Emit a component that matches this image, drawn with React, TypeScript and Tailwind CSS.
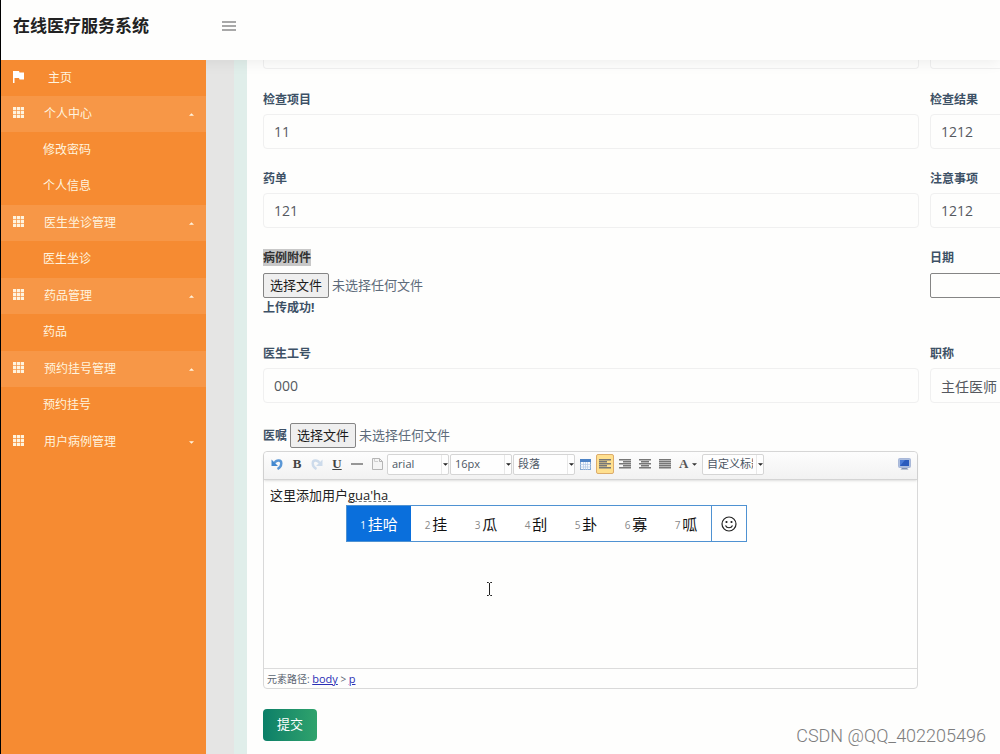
import { useRef, useState } from 'react';
import type { ReactNode } from 'react';

type MenuGroup = {
  title: string;
  open: boolean;
  items: string[];
}

const menu: MenuGroup[] = [
  { title: '个人中心', open: true, items: ['修改密码', '个人信息'] },
  { title: '医生坐诊管理', open: true, items: ['医生坐诊'] },
  { title: '药品管理', open: true, items: ['药品'] },
  { title: '预约挂号管理', open: true, items: ['预约挂号'] },
  { title: '用户病例管理', open: false, items: [] },
];

const candidates = ['挂哈', '挂', '瓜', '刮', '卦', '寡', '呱'];

const GridIcon = () => (
  <svg className="w-[11px] h-[11px] mb-1" viewBox="0 0 11 11" fill="currentColor">
    {[0, 3.9, 7.8].map((y) => [0, 3.9, 7.8].map((x) => (
      <rect key={`${x}-${y}`} x={x} y={y} width="3.200" height="3.200" />
    )))}
  </svg>
)

const Caret = ({ up = false }: { up?: boolean }) => (
  <svg className="w-[5px] h-[3px]" viewBox="0 0 6 3" fill="currentColor">
    <path d={up ? 'M0 3L3 0L6 3Z' : 'M0 0L3 3L6 0Z'} />
  </svg>
)

const Sidebar = () => (
  <nav className="w-[205px] shrink-0 bg-[#f68b32] text-xs text-[#fff4df]">
    <a href="#home" className="flex items-center h-9 pl-3">
      <svg className="w-[11px] h-3 mb-0.5 text-white" viewBox="0 0 11 12" fill="currentColor">
        <path d="M0 0H6L6.500 1.500H11V8.500H6.500L6 7H1.500V12H0Z" />
      </svg>
      <span className="ml-6">主页</span>
    </a>
    {menu.map((group) => (
      <div key={group.title}>
        <button
          className={`flex items-center w-full h-9 pl-3 pr-3 ${group.open ? 'bg-[#f79747]' : ''}`}
          aria-expanded={group.open}>
          <GridIcon />
          <span className="ml-5">{group.title}</span>
          <span className="ml-auto"><Caret up={group.open} /></span>
        </button>
        {group.items.length > 0 && (
          <ul className="pb-px">
            {group.items.map((item) => (
              <li key={item}>
                <a href="#page" className="flex items-center h-9 pl-[42px]">{item}</a>
              </li>
            ))}
          </ul>
        )}
      </div>
    ))}
  </nav>
)

const labelClass = 'block text-xs leading-5 font-bold text-[#3d5166]'

const Field = ({ id, label, value }: { id: string, label: string, value: string }) => (
  <div className="flex flex-col gap-1">
    <label className={labelClass} htmlFor={id}>{label}</label>
    <input
      className="w-full h-[35px] px-2.5 border border-[#f0f0f0] rounded-sm bg-transparent text-sm text-[#55595f]"
      id={id}
      type="text"
      defaultValue={value} />
  </div>
)

const FilePicker = ({ id }: { id: string }) => {
  const ref = useRef<HTMLInputElement>(null);
  const [name, setName] = useState('未选择任何文件');
  return (
    <div className="flex items-center gap-[3px] text-[13px]">
      <button
        type="button"
        className="h-[25px] px-1.5 border border-[#858585] rounded-xs bg-[#efefef] text-[#1c1c1c]"
        onClick={() => ref.current?.click()}>
        选择文件
      </button>
      <span className="text-[#5d6b7a]">{name}</span>
      <input ref={ref} type="file" id={id} hidden
        onChange={(e) => setName(e.target.files?.[0]?.name ?? '未选择任何文件')} />
    </div>
  )
}

const ToolSelect = ({ label, value }: { label: string, value: string }) => (
  <div className="relative w-[62px] h-[21px] shrink-0 border border-[#d5d5d5] rounded-xs bg-[#fefefe]">
    <select
      className="block appearance-none w-[50px] h-full pl-1 overflow-hidden text-[11px] text-[#4c5663]"
      aria-label={label}>
      <option>{value}</option>
    </select>
    <span className="absolute right-0 top-0 flex items-center justify-center w-[7px] h-full border-l border-[#e8e8e8] text-[#222] pointer-events-none">
      <Caret />
    </span>
  </div>
)

const ToolButton = ({ label, active = false, children }: { label: string, active?: boolean, children: ReactNode }) => (
  <button
    type="button"
    aria-label={label}
    className={`flex items-center justify-center w-[18px] h-5 mx-px shrink-0 rounded-xs border ${active ? 'border-[#dcac6c] bg-[#ffe08f]' : 'border-transparent'}`}>
    {children}
  </button>
)

// the second, fourth... lines are the short ones
const AlignIcon = ({ x, width }: { x: number, width: number }) => (
  <svg className="w-3 h-[10px] shrink-0" viewBox="0 0 12 10" fill="#777">
    {[0, 2, 4, 6, 8].map((y, i) => (
      <rect key={y} x={i % 2 ? x : 0} y={y} width={i % 2 ? width : 12} height="1.500" />
    ))}
  </svg>
)

const UndoIcon = ({ redo = false }: { redo?: boolean }) => (
  <svg className="w-3 h-3 shrink-0" viewBox="0 0 12 12" fill="none">
    <g transform={redo ? 'translate(12 0) scale(-1 1)' : undefined}>
      <path d="M3.500 5C5.500 1.500 10.500 1.800 10.300 5.500C10.200 8.500 8.500 10 6.500 11" stroke={redo ? '#cddbeb' : '#5a97d6'} strokeWidth="2.400" />
      <path d="M0.500 1.500V8H7Z" fill={redo ? '#cddbeb' : '#4288cf'} />
    </g>
  </svg>
)

const Toolbar = () => (
  <div className="flex items-center h-[28px] pl-[3px] pr-1.5 pb-[3px] border-b border-[#d4d4d4] bg-linear-to-b from-[#fdfdfd] to-[#f2f2f2] shadow-sm rounded-t-sm">
    <ToolButton label="撤销"><UndoIcon /></ToolButton>
    <ToolButton label="加粗"><span className="font-['Liberation_Serif',serif] text-[13px] font-bold text-[#444]">B</span></ToolButton>
    <ToolButton label="重做"><UndoIcon redo /></ToolButton>
    <ToolButton label="下划线"><span className="font-['Liberation_Serif',serif] text-[13px] font-bold underline text-[#444]">U</span></ToolButton>
    <ToolButton label="分隔线">
      <svg className="w-3 h-3 shrink-0" viewBox="0 0 12 12"><path d="M0 6H12" stroke="#555" strokeWidth="1.200" /></svg>
    </ToolButton>
    <ToolButton label="清空文档">
      <svg className="w-[11px] h-3 shrink-0" viewBox="0 0 11 12">
        <path d="M0.500 0.500H7.500L10.500 3.500V11.500H0.500Z" fill="#f4f4f4" stroke="#b5b5b5" />
        <path d="M7.500 0.500V3.500H10.500" fill="none" stroke="#b5b5b5" />
        <path d="M2.500 1V3.500H6" fill="none" stroke="#cecece" />
      </svg>
    </ToolButton>
    <div className="flex gap-px">
      <ToolSelect label="字体" value="arial" />
      <ToolSelect label="字号" value="16px" />
      <ToolSelect label="段落格式" value="段落" />
    </div>
    <ToolButton label="插入表格">
      <svg className="w-[11px] h-[11px] shrink-0" viewBox="0 0 11 11">
        <rect x="0.500" y="0.500" width="10" height="10" fill="#f5f9fd" stroke="#86a9d2" />
        <rect width="11" height="3" fill="#4d83c6" />
        <path d="M3.500 3V11M5.500 3V11M7.500 3V11M0 5.500H11M0 8H11" stroke="#b3cae5" strokeWidth="0.700" />
      </svg>
    </ToolButton>
    <ToolButton label="居左对齐" active><AlignIcon x={0} width={8} /></ToolButton>
    <ToolButton label="居右对齐"><AlignIcon x={4} width={8} /></ToolButton>
    <ToolButton label="居中对齐"><AlignIcon x={2} width={8} /></ToolButton>
    <ToolButton label="两端对齐"><AlignIcon x={0} width={12} /></ToolButton>
    <button type="button" className="flex items-center gap-1 w-[27px] shrink-0 pl-1 text-[#333]" aria-label="字体颜色">
      <span className="font-['Liberation_Serif',serif] text-[13px] font-bold text-[#555]">A</span>
      <Caret />
    </button>
    <ToolSelect label="自定义标题" value="自定义标题" />
    <button type="button" className="ml-auto" aria-label="全屏">
      <svg className="w-[13px] h-3" viewBox="0 0 13 12">
        <rect x="0.500" y="0.500" width="12" height="9" rx="1" fill="#aebfdf" stroke="#a9b8d8" />
        <rect x="2" y="2" width="9" height="6" fill="#2b5bbd" />
        <path d="M2 8L7 2H2Z" fill="#4b7bd6" />
        <path d="M4 10H9L10.500 11.500H2.500Z" fill="#7f8fb0" />
      </svg>
    </button>
  </div>
)

const Candidates = () => (
  <div className="absolute left-[82px] top-[25px] flex h-[37px] border border-[#4f92d2] bg-white">
    <span className="absolute left-0.5 -top-[5px] w-[42px] border-t border-dashed border-[#777]" />
    {candidates.map((word, i) => (
      <div
        key={word}
        className={`flex items-center justify-center gap-0.5 text-[15px] ${i === 0 ? 'w-16 bg-[#0a6fdc] text-white' : 'w-[50px] text-[#111]'}`}>
        <span className={`text-[10px] pt-1 ${i === 0 ? 'text-white' : 'text-[#888]'}`}>{i + 1}</span>
        <span className="pt-px">{word}</span>
      </div>
    ))}
    <button type="button" className="flex items-center justify-center w-[35px] border-l border-[#4f92d2]" aria-label="表情">
      <svg className="w-4 h-4" viewBox="0 0 16 16" fill="none" stroke="#222" strokeWidth="1.200">
        <circle cx="8" cy="8" r="7" />
        <path d="M4.500 9.500C5.800 12.500 10.200 12.500 11.500 9.500" />
        <circle cx="5.500" cy="6" r="0.500" fill="#222" />
        <circle cx="10.500" cy="6" r="0.500" fill="#222" />
      </svg>
    </button>
  </div>
)

const Editor = () => (
  <div className="mr-px border border-[#d9d9d9] rounded-sm">
    <Toolbar />
    <div className="relative">
      <textarea
        className="block w-full h-[188px] px-1.5 py-[5px] resize-none text-[13px] leading-5 text-[#222]"
        id="advice"
        spellCheck={false}
        defaultValue="这里添加用户gua'ha" />
      <Candidates />
      <svg className="absolute left-[222px] top-[102px] w-[7px] h-[14px]" viewBox="0 0 7 14" fill="none" stroke="#222">
        <path d="M1 0.500H2.500L3.500 1.500L4.500 0.500H6M3.500 1V13M1 13.500H2.500L3.500 12.500L4.500 13.500H6" />
      </svg>
    </div>
    <div className="h-5 px-[3px] border-t border-[#dcdcdc] text-[10px] leading-5 text-[#5a6470]">
      元素路径: <a href="#body" className="text-[11px] text-[#2a2fb5] underline">body</a> &gt; <a href="#p" className="text-[11px] text-[#2a2fb5] underline">p</a>
    </div>
  </div>
)

const App = () => {
  return (
    <div className="relative flex flex-col min-h-screen overflow-hidden border-l border-black bg-[#fefefd] font-['Open_Sans','Noto_Sans_CJK_SC',sans-serif]">
      <header className="relative z-10 flex items-start h-[60px] pl-3 bg-[#fefefd] shadow-[0_2px_14px_rgba(0,0,0,0.07)]">
        <h1 className="w-[209px] pt-3 text-[17px] leading-7 font-bold text-[#222]">在线医疗服务系统</h1>
        <button className="pt-[21px]" aria-label="菜单">
          <svg className="w-[14px] h-[10px]" viewBox="0 0 14 10" stroke="#8c8c8c" strokeWidth="1.500">
            <path d="M0 1H14M0 5H14M0 9H14" />
          </svg>
        </button>
      </header>
      <div className="flex grow">
        <div className="relative z-20 flex"><Sidebar /></div>
        <main className="flex grow min-w-0 pl-7 bg-[#e5e5e4]">
          <form className="grow min-w-0 overflow-hidden pl-4 pb-3 border-l-[13px] border-[#e0eeea] bg-[#fefefd]" onSubmit={(e) => e.preventDefault()}>
            <div className="grid grid-cols-[89%_89%] gap-x-[11px] gap-y-5">
              <div className="h-[9px] mb-px border border-t-0 border-[#f0f0f0] rounded-b-sm" />
              <div className="h-[9px] mb-px border border-t-0 border-[#f0f0f0] rounded-b-sm" />
              <Field id="item" label="检查项目" value="11" />
              <Field id="result" label="检查结果" value="1212" />
              <Field id="drugs" label="药单" value="121" />
              <Field id="notes" label="注意事项" value="1212" />
              <div className="pb-1.5">
                <label className={labelClass} htmlFor="attachment"><span className="bg-[#c8c8c8] text-[#333]">病例附件</span></label>
                <div className="pt-[5px]"><FilePicker id="attachment" /></div>
                <p className={labelClass}>上传成功!</p>
              </div>
              <div className="flex flex-col gap-[5px]">
                <label className={labelClass} htmlFor="date">日期</label>
                <input className="h-[25px] w-[180px] px-1 border border-[#858585] rounded-xs text-sm" id="date" type="text" />
              </div>
              <Field id="doctor" label="医生工号" value="000" />
              <Field id="rank" label="职称" value="主任医师" />
              <div>
                <div className="flex items-center gap-[3px] pb-[3px]">
                  <label className={labelClass} htmlFor="advice">医嘱</label>
                  <FilePicker id="advice-file" />
                </div>
                <Editor />
              </div>
            </div>
            <button className="h-8 px-3.5 mt-5 rounded-sm bg-linear-to-r from-[#0a7f68] to-[#2fa36c] text-[13px] text-white" type="submit">提交</button>
          </form>
        </main>
      </div>
      <div className="absolute right-3.5 bottom-1.5 z-30 font-[Roboto,sans-serif] font-light text-[18px] leading-6 text-[#7d7d7d]">CSDN @QQ_402205496</div>
    </div>
  )
}

export default App
